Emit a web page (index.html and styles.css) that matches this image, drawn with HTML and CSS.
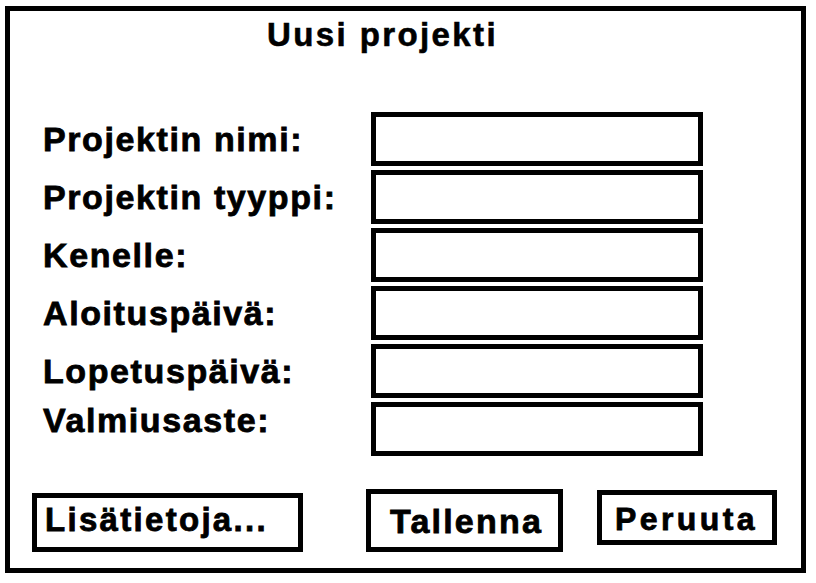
FILE: index.html
```html
<!DOCTYPE html>
<html lang="fi">
<head>
    <meta charset="UTF-8">
    <meta name="viewport" content="width=device-width, initial-scale=1.0">
    <title>Uusi projekti</title>
    <link rel="stylesheet" href="styles.css">
</head>
<body>
    <div class="window">
        <h1 class="title">Uusi projekti</h1>

        <!-- lomakkeen kentät -->
        <div class="form">
            <label class="label" for="nimi">Projektin nimi:</label>
            <input class="field" type="text" id="nimi">

            <label class="label" for="tyyppi">Projektin tyyppi:</label>
            <input class="field" type="text" id="tyyppi">

            <label class="label" for="kenelle">Kenelle:</label>
            <input class="field" type="text" id="kenelle">

            <label class="label" for="alku">Aloituspäivä:</label>
            <input class="field" type="text" id="alku">

            <label class="label" for="loppu">Lopetuspäivä:</label>
            <input class="field" type="text" id="loppu">

            <label class="label label-last" for="valmius">Valmiusaste:</label>
            <input class="field" type="text" id="valmius">
        </div>

        <!-- painikkeet -->
        <div class="actions">
            <button class="btn btn-info">Lisätietoja...</button>
            <button class="btn btn-save">Tallenna</button>
            <button class="btn btn-cancel">Peruuta</button>
        </div>
    </div>
</body>
</html>
```

FILE: styles.css
```css
/* koko sivu */
body {
    margin: 0;
    padding: 0;
    background-color: #fff;
    font-family: 'Liberation Sans', Arial, sans-serif;
    color: #000;
}

/* ikkunan kehys */
.window {
    box-sizing: border-box;
    width: 801px;
    height: 567px;
    margin: 6px 0 0 5px;
    padding-top: 4px;
    border: 5px solid #000;
}

/* otsikko */
.title {
    margin: 0 0 0 257px;
    font-size: 33px;
    line-height: 40px;
    font-weight: 700;
    letter-spacing: 2.4px;
    -webkit-text-stroke: 0.6px #000;
}

/* kentät ruudukossa */
.form {
    display: grid;
    grid-template-columns: 328px 332px;
    grid-auto-rows: 54px;
    row-gap: 4px;
    align-items: center;
    margin: 57px 0 0 33px;
}

.label {
    font-size: 34px;
    font-weight: 700;
    letter-spacing: 1.6px;
    white-space: nowrap;
    -webkit-text-stroke: 0.8px #000;
}

.label-last {
    margin-bottom: 18px;
}

.field {
    box-sizing: border-box;
    width: 332px;
    height: 54px;
    margin: 0;
    border: 5px solid #000;
    border-radius: 0;
    background-color: #fff;
    outline: none;
}

/* painikerivi */
.actions {
    display: flex;
    align-items: flex-start;
    margin: 33px 0 0 22px;
}

.btn {
    box-sizing: border-box;
    margin: 0;
    border: 5px solid #000;
    border-radius: 0;
    background-color: #fff;
    color: #000;
    font-family: 'Liberation Sans', Arial, sans-serif;
    font-weight: 700;
    text-align: left;
    vertical-align: top;
    white-space: nowrap;
    cursor: pointer;
    -webkit-text-stroke: 0.8px #000;
}

.btn-info {
    width: 271px;
    height: 59px;
    margin-top: 4px;
    padding: 5px 0 11px 8px;
    font-size: 33px;
    line-height: 33px;
    letter-spacing: 2.3px;
}

.btn-save {
    width: 197px;
    height: 63px;
    margin-left: 63px;
    padding: 10px 0 9px 19px;
    font-size: 34px;
    line-height: 34px;
    letter-spacing: 2.2px;
}

.btn-cancel {
    width: 180px;
    height: 55px;
    margin: 1px 0 0 34px;
    padding: 8px 0 5px 13px;
    font-size: 32px;
    line-height: 32px;
    letter-spacing: 3.4px;
}
```
